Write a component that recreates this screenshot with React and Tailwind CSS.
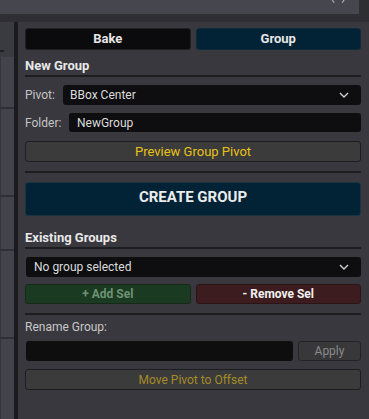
function Chevron() {
  return (
    <svg width="10" height="6" viewBox="0 0 10 6" className="shrink-0">
      <polyline points="1,1 5,5 9,1" fill="none" stroke="#d0d0d0" strokeWidth="1.4" />
    </svg>
  )
}

function Divider() {
  return <div className="h-[2px] bg-[#1d1d20]" />
}

export default function App() {
  return (
    <div
      className="w-[369px] h-[419px] bg-[#2e2e33] overflow-hidden flex flex-col"
      style={{ fontFamily: 'Roboto, "Liberation Sans", sans-serif' }}
    >
      {/* top bar, cut off */}
      <div className="h-[14px] flex shrink-0">
        <div className="w-[359px] bg-[#46464e] overflow-hidden flex justify-end pr-[13px]">
          <span className="text-[13px] leading-[14px] text-[#c8c8c8] mt-[-11px]">3 Actor(s)</span>
        </div>
      </div>
      <div className="h-[8px] shrink-0" />

      <div className="flex flex-1 min-h-0">
        {/* left outliner strip */}
        <div className="w-[14px] bg-[#3a3a41] flex flex-col">
          <div className="h-[28px]" />
          <div className="h-[2px] w-[4px] bg-[#1f1f23]" />
          <div className="h-[5px]" />
          <div className="flex-1 flex flex-col gap-[2px] bg-[#2f2f35]">
            <div className="h-[50px] bg-[#43434b] border-l border-[#35353b]" />
            <div className="h-[86px] bg-[#43434b] border-l border-[#35353b]" />
            <div className="h-[52px] bg-[#43434b] border-l border-[#35353b]" />
            <div className="h-[86px] bg-[#43434b] border-l border-[#35353b]" />
            <div className="flex-1 bg-[#43434b] border-l border-[#35353b]" />
          </div>
        </div>
        <div className="w-[4px] bg-[#1b1b1e]" />

        {/* main panel */}
        <div className="flex-1 bg-[#38383e] pl-[7px] pr-[8px] pt-[6px] flex flex-col">
          <div className="flex gap-[5px] h-[22px]">
            <div className="flex-1 rounded-[3px] bg-[#0b0b0d] border border-[#202024] flex items-center justify-center text-[13px] font-bold text-[#e6e6e6]">
              Bake
            </div>
            <div className="flex-1 rounded-[3px] bg-[#022335] border border-[#0f2c3b] flex items-center justify-center text-[13px] font-bold text-[#e6e6e6]">
              Group
            </div>
          </div>

          <div className="mt-[9px] text-[13px] leading-[14px] font-bold text-[#e8e8e8]">New Group</div>
          <div className="mt-[2px]">
            <Divider />
          </div>

          <div className="mt-[8px] h-[20px] flex items-center">
            <span className="w-[38px] text-[12px] text-[#c4c4c4]">Pivot:</span>
            <div className="flex-1 h-full rounded-[3px] bg-[#0e0e10] flex items-center justify-between pl-[7px] pr-[12px] text-[12px] text-[#dcdcdc]">
              <span>BBox Center</span>
              <Chevron />
            </div>
          </div>

          <div className="mt-[8px] h-[19px] flex items-center">
            <span className="w-[44px] text-[12px] text-[#c4c4c4]">Folder:</span>
            <div className="flex-1 h-full rounded-[3px] bg-[#0e0e10] flex items-center pl-[8px] text-[12px] text-[#dcdcdc]">
              NewGroup
            </div>
          </div>

          <div className="mt-[9px] h-[21px] rounded-[3px] bg-[#3b3b3c] border border-[#1e1e20] flex items-center justify-center text-[13px] text-[#e8c216]">
            Preview Group Pivot
          </div>

          <div className="mt-[9px]">
            <Divider />
          </div>

          <div className="mt-[9px] h-[34px] rounded-[3px] bg-[#022335] border border-[#1b3442] flex items-center justify-center text-[15px] font-bold text-[#ececec] pb-[4px]">
            CREATE GROUP
          </div>

          <div className="mt-[15px] text-[13px] leading-[14px] font-bold text-[#e8e8e8]">Existing Groups</div>
          <div className="mt-[2px]">
            <Divider />
          </div>

          <div className="mt-[8px] h-[20px] rounded-[3px] bg-[#0e0e10] flex items-center justify-between pl-[8px] pr-[12px] ml-[1px] text-[12px] text-[#dcdcdc]">
            <span>No group selected</span>
            <Chevron />
          </div>

          <div className="mt-[7px] flex gap-[5px] h-[20px]">
            <div className="flex-1 rounded-[3px] bg-[#1a3a21] border border-[#15291a] flex items-center justify-center text-[12px] font-bold text-[#6e9272]">
              + Add Sel
            </div>
            <div className="flex-1 rounded-[3px] bg-[#3c1c1f] border border-[#2a1416] flex items-center justify-center text-[12px] font-bold text-[#f0f0f0]">
              - Remove Sel
            </div>
          </div>

          <div className="mt-[9px]">
            <Divider />
          </div>

          <div className="mt-[5px] text-[12px] leading-[14px] text-[#c8c8c8]">Rename Group:</div>

          <div className="mt-[7px] flex gap-[5px] h-[20px]">
            <div className="flex-1 ml-[1px] rounded-[3px] bg-[#0e0e0f]" />
            <div className="w-[63px] rounded-[3px] bg-[#38383a] border border-[#242427] flex items-center justify-center text-[12px] text-[#8a8a8a]">
              Apply
            </div>
          </div>

          <div className="mt-[8px] h-[21px] rounded-[3px] bg-[#3b3b3c] border border-[#1e1e20] flex items-center justify-center text-[12px] text-[#a58b26]">
            Move Pivot to Offset
          </div>
        </div>
      </div>
    </div>
  )
}
